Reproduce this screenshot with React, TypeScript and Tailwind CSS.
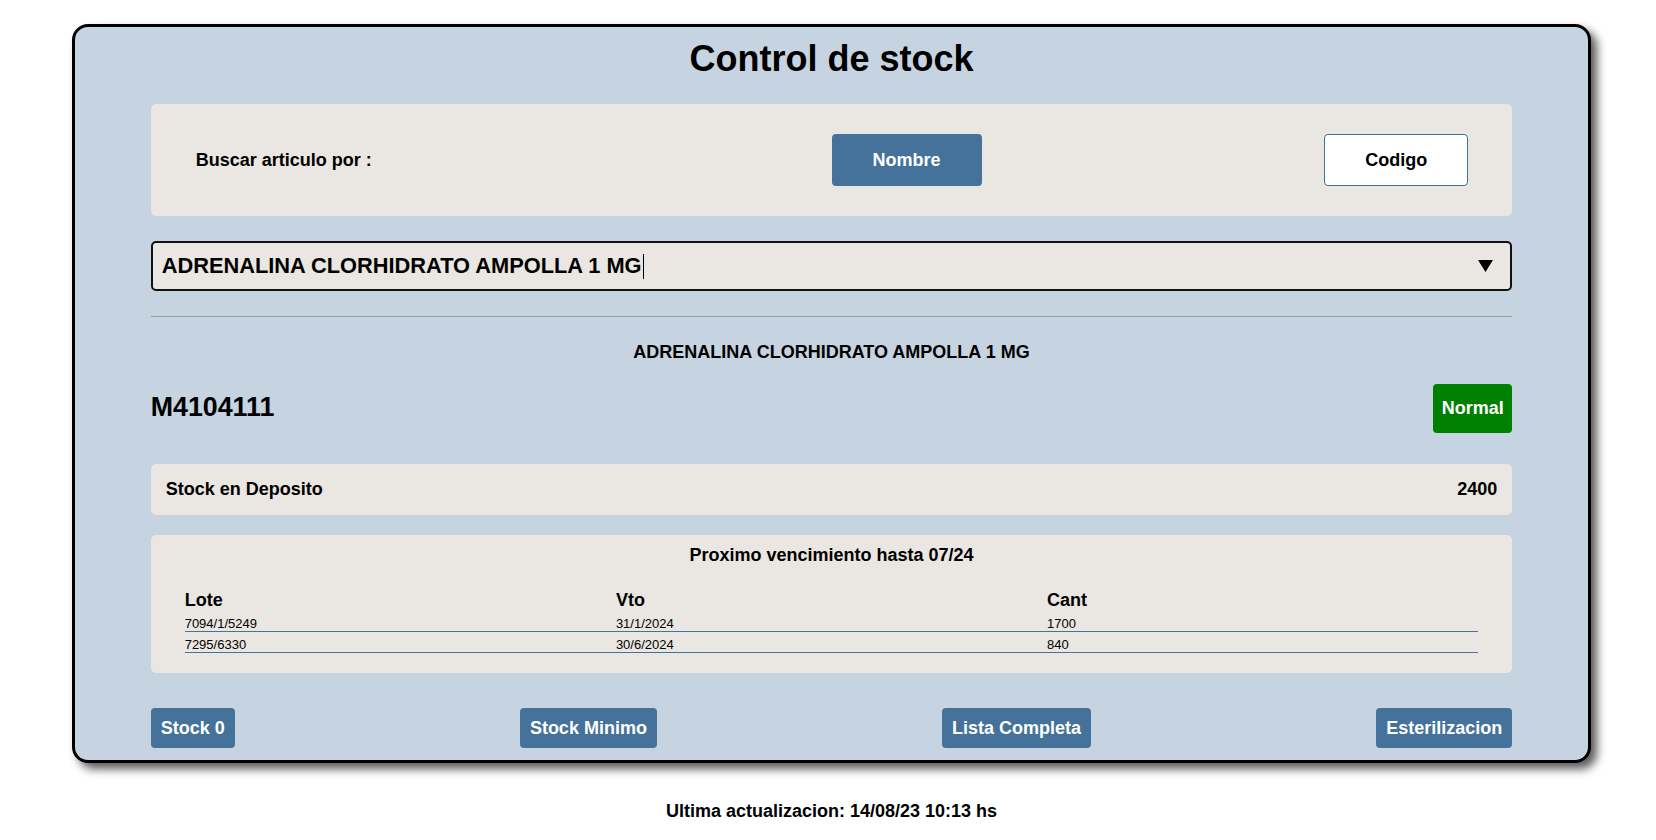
const LOTES = [
  { lote: "7094/1/5249", vto: "31/1/2024", cant: "1700" },
  { lote: "7295/6330", vto: "30/6/2024", cant: "840" },
];

const ACCIONES = ["Stock 0", "Stock Minimo", "Lista Completa", "Esterilizacion"];

export default function App() {
  return (
    <div
      className="min-h-screen bg-white pt-[24px] pb-[20px] text-black"
      style={{ fontFamily: '"Liberation Sans", Arial, sans-serif' }}
    >
      <div className="ml-[72px] w-[1519px] rounded-[16px] border-[3px] border-black bg-[#c6d3e0] pt-[11px] pb-[12px] shadow-[6px_6px_10px_rgba(0,0,0,0.65)]">
        <h1 className="text-center text-[36px] font-bold leading-[42px]">Control de stock</h1>

        <div className="mx-auto w-[90%]">
          {/* buscador */}
          <div className="mt-[24px] grid h-[112px] grid-cols-2 items-center rounded-[5px] bg-[#eae6e1]">
            <span className="pl-[45px] text-[18px] font-bold">Buscar articulo por :</span>
            <div className="flex items-center justify-between pr-[44px]">
              <button className="h-[52px] w-[150px] rounded-[4px] bg-[#44729b] text-[18px] font-bold text-white">
                Nombre
              </button>
              <button className="h-[52px] w-[144px] rounded-[4px] border border-[#44729b] bg-white text-[18px] font-bold">
                Codigo
              </button>
            </div>
          </div>

          <div className="mt-[25px] flex h-[50px] items-center rounded-[5px] border-2 border-[#111] bg-[#eae6e1] pl-[9px] pr-[17px]">
            <span className="text-[21.8px] font-bold">ADRENALINA CLORHIDRATO AMPOLLA 1 MG</span>
            <span className="ml-[1px] h-[25px] w-px bg-black" />
            <svg className="ml-auto" width="15" height="12" viewBox="0 0 15 12">
              <polygon points="0,0 15,0 7.5,12" fill="#000" />
            </svg>
          </div>

          <hr className="mt-[25px] border-t border-[#9e9e9e]" />

          <p className="mt-[25px] text-center text-[18px] font-bold leading-[21px]">
            ADRENALINA CLORHIDRATO AMPOLLA 1 MG
          </p>

          <div className="mt-[21px] flex items-center justify-between">
            <span className="-mt-[3px] text-[26.8px] font-bold leading-[30px]">M4104111</span>
            <span className="flex h-[49px] w-[79px] items-center justify-center rounded-[4px] bg-[#008000] text-[18px] font-bold text-white">
              Normal
            </span>
          </div>

          <div className="mt-[31px] flex items-center justify-between rounded-[5px] bg-[#eae6e1] px-[15px] py-[15px] text-[18px] font-bold leading-[21px]">
            <span>Stock en Deposito</span>
            <span>2400</span>
          </div>

          {/* vencimientos */}
          <div className="mt-[20px] rounded-[5px] bg-[#eae6e1] px-[34px] pt-[10px] pb-[20px]">
            <p className="text-center text-[18px] font-bold leading-[21px]">Proximo vencimiento hasta 07/24</p>
            <table className="mt-[24px] w-full table-fixed border-collapse">
              <thead>
                <tr className="text-left text-[18px] font-bold leading-[21px]">
                  <th className="p-0">Lote</th>
                  <th className="p-0">Vto</th>
                  <th className="p-0">Cant</th>
                </tr>
              </thead>
              <tbody>
                {LOTES.map((l) => (
                  <tr key={l.lote} className="border-b border-[#44729b] text-[13px] leading-[15px]">
                    <td className="p-0 pt-[5px]">{l.lote}</td>
                    <td className="p-0 pt-[5px]">{l.vto}</td>
                    <td className="p-0 pt-[5px]">{l.cant}</td>
                  </tr>
                ))}
              </tbody>
            </table>
          </div>

          <div className="mt-[35px] flex items-center justify-between">
            {ACCIONES.map((a) => (
              <button
                key={a}
                className="h-[40px] rounded-[4px] bg-[#44729b] px-[10px] text-[18px] font-bold text-white"
              >
                {a}
              </button>
            ))}
          </div>
        </div>
      </div>

      <p className="ml-[72px] mt-[38px] w-[1519px] text-center text-[18px] font-bold leading-[21px]">
        Ultima actualizacion: 14/08/23 10:13 hs
      </p>
    </div>
  );
}
